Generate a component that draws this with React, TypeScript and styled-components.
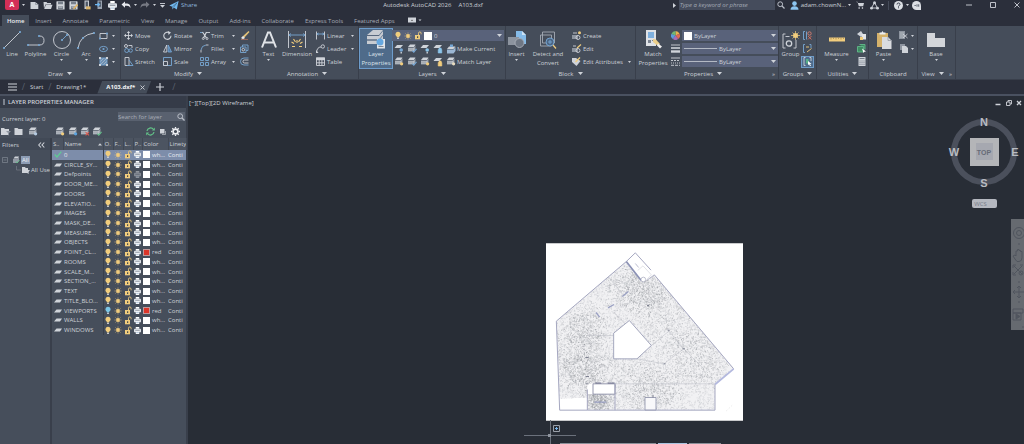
import React from "react";
import styled, { createGlobalStyle, css } from "styled-components";

const c = {
  frame: "#2b2f3b",
  ribbon: "#454d5a",
  edge: "#393f4b",
  field: "#59627a",
  canvas: "#282d36",
  text: "#cdd1d7",
  dim: "#a3a9b4",
  ink: "#cfd3d9",
  blue: "#77a7d4",
  gold: "#f1cd7d",
};

const Global = createGlobalStyle`
  * { box-sizing: border-box; }
  body { margin: 0; background: ${c.canvas}; }
  body, button, input, select, table {
    font-family: "Open Sans", "Noto Sans", sans-serif;
    font-size: 6px;
    font-weight: 500;
    line-height: 8px;
    color: ${c.text};
  }
  button { border: 0; padding: 0; background: none; white-space: nowrap; cursor: pointer; }
  svg { display: block; flex: none; }
`;

/* ---------- shared pieces ---------- */

const Page = styled.div`
  display: flex;
  flex-direction: column;
  height: 100vh;
  overflow: hidden;
`;

const Spacer = styled.div`
  flex: 1;
`;

const Cell = styled.span<{ $w?: number }>`
  display: flex;
  align-items: center;
  justify-content: center;
  flex: none;
  width: ${(p) => p.$w ?? 13}px;
`;

const IconButton = styled.button<{ $w?: number; $on?: boolean }>`
  display: flex;
  align-items: center;
  justify-content: center;
  flex: none;
  width: ${(p) => p.$w ?? 13}px;
  height: 12px;
  ${(p) =>
    p.$on &&
    css`
      background: #4f6c8c;
      outline: 1px solid #6f9cc8;
      outline-offset: -1px;
    `}
`;

const Caret = ({ small }: { small?: boolean }) => (
  <svg width={small ? 3 : 5} height={small ? 2 : 3} viewBox="0 0 5 3">
    <path d="M0 0h5L2.5 3z" fill={c.ink} />
  </svg>
);

type Draw = { w?: number; h?: number; children: React.ReactNode };
const Pic = ({ w = 10, h = 10, children }: Draw) => (
  <svg
    width={w}
    height={h}
    viewBox={`0 0 ${w} ${h}`}
    fill="none"
    stroke={c.ink}
    strokeWidth="0.9"
    aria-hidden="true"
  >
    {children}
  </svg>
);
const F = { fill: c.ink, stroke: "none" };
const FB = { fill: c.blue, stroke: "none" };
const FG = { fill: c.gold, stroke: "none" };
const FD = { fill: "#8d949f", stroke: "none" };

/* ---------- icons ---------- */

const Bulb = ({ cold }: { cold?: boolean }) => (
  <Pic w={8} h={9}>
    <circle cx="4" cy="3.2" r="2.5" fill={cold ? "#7cc6e6" : c.gold} stroke="none" />
    <path d="M2.9 5h2.2v1.5H2.9z" fill={cold ? "#7cc6e6" : c.gold} stroke="none" />
    <path d="M3.100 6.700h1.800v1.400H3.100z" {...F} />
  </Pic>
);
const Sun = () => (
  <Pic w={8} h={8}>
    <circle cx="4" cy="4" r="1.9" {...FG} />
    <path
      d="M4 .3v7.4M.3 4h7.4M1.3 1.3l5.4 5.4M6.7 1.3L1.3 6.7"
      stroke={c.gold}
      strokeWidth="0.6"
      opacity="0.7"
    />
  </Pic>
);
const Lock = () => (
  <Pic w={8} h={9}>
    <path d="M1 4h5v4.3H1z" {...FG} />
    <path d="M4.5 4V2.3q0-1.4 1.3-1.4t1.3 1.4v1" stroke={c.gold} />
    <path d="M3 5.3h1.2v1.6H3z" fill="#4a4f52" stroke="none" />
  </Pic>
);
const Printer = ({ off, w = 8 }: { off?: boolean; w?: number }) => (
  <svg width={w} height={w} viewBox="0 0 8 8" opacity={off ? 0.4 : 1}>
    <path d="M2 0h4v2H2z" fill="#fff" />
    <rect x="0" y="2" width="8" height="4" rx="1" fill="#dfe3e9" />
    <path d="M1.5 3.8h5" stroke="#6b7380" strokeWidth="0.7" />
    <path d="M2 4.8h4V8H2z" fill="#f4f6f8" />
    <path d="M2.6 6.3h2.8" stroke="#83a7cc" strokeWidth="0.6" />
  </svg>
);
const Magnifier = () => (
  <Pic w={8} h={8}>
    <circle cx="3.2" cy="3.2" r="2.4" stroke="#b9bec7" strokeWidth="1" />
    <path d="M5 5l2.5 2.5" stroke="#b9bec7" strokeWidth="1.3" />
  </Pic>
);
const Sheets = ({ mark = "none", shape = "dot" }: { mark?: string; shape?: string }) => (
  <Pic w={10} h={9}>
    <path d="M3 .5h5.5L7 3H1z" {...F} />
    <path d="M1 3.4h6L8.5 1.2v4L7 7.4H1z" fill="#9299a4" stroke="none" />
    <path d="M1 4.8h6M1 6.2h6M7 3.4v4" stroke="#dfe2e7" strokeWidth="0.5" />
    {shape === "dot" && <circle cx="7.6" cy="6.8" r="1.6" fill={mark} stroke="none" />}
    {shape === "x" && <path d="M5.6 5.2l3.4 3.2M9 5.2L5.6 8.4" stroke={mark} strokeWidth="1.1" />}
    {shape === "v" && <path d="M5.4 6.6l1.4 1.6 2.7-3.4" stroke={mark} strokeWidth="1.1" />}
  </Pic>
);
const Leaf = ({ mark, lock }: { mark: string; lock?: boolean }) => (
  <Pic w={10} h={10}>
    <path d="M3 1h6L6.5 4H.5z" {...F} />
    {lock ? (
      <path d="M5.2 5.500h3.6v3.500H5.2zM6 5.500V4h2.2v1.500" fill={mark} stroke={mark} strokeWidth="0.6" />
    ) : (
      <>
        <circle cx="7.2" cy="6" r="1.800" fill={mark} stroke="none" />
        <path d="M6.5 8h1.4v1.4H6.5z" {...F} />
      </>
    )}
  </Pic>
);
const Doc = () => (
  <Pic w={9} h={9}>
    <path d="M.5 1h4.8l3 2.4V8H.5z" {...F} />
    <path d="M5.5 1v2.5h3" stroke="#7f8692" strokeWidth="0.6" />
  </Pic>
);
const Folder = () => (
  <Pic w={10} h={9}>
    <path d="M.5 1h3l.8 1H8v1.4H2.5L1 7.6z" {...F} />
    <path d="M2.9 3.8h6.6L8 8H1.2z" {...F} />
  </Pic>
);
const Disk = ({ pen }: { pen?: boolean }) => (
  <Pic w={9} h={9}>
    <rect x=".4" y=".3" width="8.2" height="8.2" rx=".6" {...F} />
    <path d="M2 .6h5v2.6H2zM2 5.2h5v3H2z" fill="#777f8b" stroke="none" />
    <path d="M2.6 6.2h3.8" stroke="#e7e9ed" strokeWidth="0.6" />
    {pen && <path d="M4.5 8l4-4.4" stroke="#e1b566" strokeWidth="1.5" />}
  </Pic>
);
const Tray = ({ blue }: { blue?: boolean }) => (
  <Pic w={9} h={10}>
    <path d="M2.5.5h4.5v8.5H2.5z" fill={blue ? "#9aa3b0" : "#c6cad1"} stroke="none" />
    <path d="M3.6 1.6h2.3v5.2H3.6z" fill="#4c5564" stroke="none" />
    {blue ? (
      <path d="M0 4.6h4M2.6 3l2 1.6-2 1.6" stroke="#6db4ee" strokeWidth="1.1" />
    ) : (
      <path d="M4 9.4V6.4h4.6v3z" fill="#d9b36c" stroke="none" />
    )}
  </Pic>
);
const Arrow = ({ flip }: { flip?: boolean }) => (
  <svg width="10" height="8" viewBox="0 0 10 8" opacity={flip ? 0.4 : 1}>
    <g transform={flip ? "matrix(-1 0 0 1 10 0)" : undefined}>
      <path d="M.5 3.500L4 .5v2h2.300Q9.500 2.800 9.500 7Q8.300 4.700 6 4.700H4v2z" fill="#e7e9ee" />
    </g>
  </svg>
);
const Plane = () => (
  <Pic w={10} h={9}>
    <path d="M9.600 0L7.800 8.500 4.800 6.600 3.600 8.600 3.200 5.800.3 4.600z" fill="#72b9ee" stroke="none" />
    <path d="M3.300 5.800L8 1.800 4.600 6.300" stroke="#2f4e6c" strokeWidth=".5" />
  </Pic>
);

/* ---------- title bar ---------- */

const TitleBar = styled.header`
  display: flex;
  align-items: center;
  height: 13px;
  padding-bottom: 3px;
  background: ${c.frame};
  flex: none;
`;
const Logo = styled.button`
  width: 14px;
  height: 10px;
  margin-left: 5px;
  border-radius: 0 0 2px 2px;
  background: #d32f57;
  color: #fff;
  font-size: 7px;
  font-weight: 700;
  line-height: 10px;
`;
const Share = styled.button`
  display: flex;
  align-items: center;
  gap: 2px;
  margin-left: 2px;
  color: #8fb6dc;
`;
const AppTitle = styled.h1`
  display: flex;
  gap: 7px;
  flex: 1;
  margin: 0 0 0 186px;
  font-size: 6px;
  font-weight: 500;
  white-space: nowrap;
`;
const KeywordBox = styled.input`
  width: 96px;
  height: 10px;
  border: 0;
  padding: 0 1px;
  margin-left: 3px;
  background: #454c5c;
  font-style: italic;
  &::placeholder { color: ${c.dim}; opacity: 1; }
`;
const User = styled.button`
  display: flex;
  align-items: center;
  gap: 2px;
  margin-left: 2px;
`;
const Rule = styled.i`
  width: 1px;
  height: 9px;
  margin: 0 3px;
  background: #454b59;
`;
const WindowButtons = styled.div`
  display: flex;
  gap: 12px;
  margin: 0 1px 0 40px;
`;

const Title = () => (
  <TitleBar>
    <Logo aria-label="Application menu">A</Logo>
    <Cell $w={9}><Caret small /></Cell>
    <IconButton aria-label="New"><Doc /></IconButton>
    <IconButton aria-label="Open"><Folder /></IconButton>
    <IconButton aria-label="Save"><Disk /></IconButton>
    <IconButton aria-label="Save as"><Disk pen /></IconButton>
    <IconButton aria-label="Open from web"><Tray /></IconButton>
    <IconButton aria-label="Save to web"><Tray blue /></IconButton>
    <IconButton aria-label="Plot"><Printer w={9} /></IconButton>
    <IconButton $w={14} aria-label="Undo"><Arrow /></IconButton>
    <Cell $w={5}><Caret small /></Cell>
    <IconButton $w={13} aria-label="Redo"><Arrow flip /></IconButton>
    <Cell $w={6}><Caret small /></Cell>
    <IconButton $w={10} aria-label="Customize toolbar">
      <Pic w={5} h={5}><path d="M0 .5h5" /><path d="M0 2h5L2.500 4.800z" {...F} /></Pic>
    </IconButton>
    <Share><Plane />Share</Share>
    <AppTitle><span>Autodesk AutoCAD 2026</span><span>A103.dxf</span></AppTitle>
    <Pic w={3} h={5}><path d="M0 0l3 2.500L0 5z" {...F} /></Pic>
    <KeywordBox aria-label="Search help" placeholder="Type a keyword or phrase" />
    <IconButton aria-label="Search"><Magnifier /></IconButton>
    <User>
      <Pic w={9} h={9}>
        <circle cx="4.500" cy="2.600" r="2.300" fill="#8cc5f0" stroke="none" />
        <path d="M.5 8.800q0-3.500 4-3.500t4 3.500z" fill="#8cc5f0" stroke="none" />
      </Pic>
      adam.chownN...
      <Caret small />
    </User>
    <IconButton $w={18} aria-label="Store">
      <Pic w={8} h={8}>
        <path d="M0 .8h1.500l1.300 4.400h4.400L8 2H2.200z" {...F} />
        <path d="M2.500 7h1.300M5.800 7h1.300" strokeWidth="1.300" />
      </Pic>
    </IconButton>
    <IconButton $w={10} aria-label="Autodesk apps">
      <Pic w={9} h={9}>
        <path d="M4.500 1.500L1.500 7h6z" />
        <circle cx="4.500" cy="1.700" r="1.500" {...F} />
        <circle cx="1.500" cy="7.200" r="1.400" {...F} />
        <circle cx="7.500" cy="7.200" r="1.400" {...F} />
      </Pic>
    </IconButton>
    <Cell $w={6}><Caret small /></Cell>
    <Rule />
    <IconButton aria-label="Help">
      <svg width="9" height="9" viewBox="0 0 9 9">
        <circle cx="4.500" cy="4.500" r="4.500" fill="#dcdfe4" />
        <path d="M3 3.500q0-1.500 1.500-1.500T6 3.400q0 .8-1.500 1.600v.6M4.500 6.300v1" stroke="#3a404e" fill="none" />
      </svg>
    </IconButton>
    <Cell $w={5}><Caret small /></Cell>
    <IconButton aria-label="Assistant">
      <svg width="9" height="9" viewBox="0 0 9 9">
        <path d="M4.500 0a4.500 4.500 0 0 1 4.500 4.500V9H4.500a4.500 4.500 0 0 1 0-9z" fill="#dcdfe4" />
        <path d="M2.500 4.500h1.300M5 3.300v2.400M6.700 3.300v2.400" stroke="#59606d" fill="none" />
      </svg>
    </IconButton>
    <WindowButtons>
      <IconButton $w={12} aria-label="Minimize"><Pic w={6} h={6}><path d="M0 3h6" /></Pic></IconButton>
      <IconButton $w={12} aria-label="Maximize"><Pic w={6} h={6}><path d="M.5.500h5v5h-5z" /></Pic></IconButton>
      <IconButton $w={12} aria-label="Close"><Pic w={6} h={6}><path d="M.5.500l5 5M5.500.500l-5 5" /></Pic></IconButton>
    </WindowButtons>
  </TitleBar>
);

/* ---------- ribbon tabs ---------- */

const TabRow = styled.nav`
  display: flex;
  align-items: flex-end;
  height: 13px;
  padding-left: 2px;
  background: ${c.frame};
  flex: none;
`;
const Tab = styled.button<{ $on?: boolean }>`
  height: 11px;
  padding: 0 5px;
  margin-right: 1px;
  color: ${(p) => (p.$on ? "#eceef1" : "#a7acb6")};
  background: ${(p) => (p.$on ? c.ribbon : "none")};
  font-weight: ${(p) => (p.$on ? 600 : 400)};
`;
const TABS = ["Home", "Insert", "Annotate", "Parametric", "View", "Manage", "Output", "Add-ins", "Collaborate", "Express Tools", "Featured Apps"];

/* ---------- ribbon ---------- */

const RibbonBar = styled.div`
  display: flex;
  height: 54px;
  background: ${c.ribbon};
  border-bottom: 1px solid ${c.edge};
  flex: none;
`;
const Group = styled.section<{ $w: number }>`
  display: flex;
  flex-direction: column;
  flex: none;
  width: ${(p) => p.$w}px;
  padding: 3px 1px 0;
  border-right: 1px solid ${c.edge};
`;
const GroupBody = styled.div`
  display: flex;
  height: 39px;
`;
const GroupTitle = styled.button<{ $launch?: boolean }>`
  position: relative;
  display: flex;
  align-items: center;
  justify-content: center;
  gap: 4px;
  height: 11px;
  padding-right: ${(p) => (p.$launch ? 8 : 0)}px;
`;
const Launcher = styled.span`
  position: absolute;
  right: 2px;
`;
const Col = styled.div<{ $w: number }>`
  display: flex;
  flex-direction: column;
  flex: none;
  width: ${(p) => p.$w}px;
`;
const Row = styled.div`
  display: flex;
  align-items: center;
  height: 13px;
`;
const Tool = styled.button`
  display: flex;
  align-items: center;
  height: 13px;
  flex: none;
  text-align: left;
  > svg:last-child { margin-left: auto; margin-right: 3px; }
`;
const Big = styled.button<{ $w: number; $on?: boolean }>`
  display: flex;
  flex-direction: column;
  align-items: center;
  flex: none;
  width: ${(p) => p.$w}px;
  height: 39px;
  white-space: normal;
  ${(p) =>
    p.$on &&
    css`
      background: #4f6b8a;
      outline: 1px solid #6d9ccb;
      color: #dfe5ec;
    `}
`;
const BigArt = styled.span`
  display: flex;
  align-items: center;
  justify-content: center;
  height: 21px;
`;
const BigLabel = styled.span`
  display: block;
  line-height: 9px;
  white-space: pre;
  text-align: center;
`;
const Combo = styled.div`
  display: flex;
  align-items: center;
  flex: 1;
  height: 11px;
  padding: 0 2px;
  gap: 2px;
  background: ${c.field};
`;
const Select = styled.select`
  appearance: none;
  flex: 1;
  min-width: 0;
  height: 10px;
  padding: 0;
  border: 0;
  background: none;
`;
const Swatch = styled.i<{ $color?: string; $size?: number }>`
  flex: none;
  width: ${(p) => p.$size ?? 8}px;
  height: ${(p) => p.$size ?? 8}px;
  background: ${(p) => p.$color ?? "#fff"};
  ${(p) => p.$color && css`border: 1px solid #c09a9c;`}
`;
const LineSample = styled.i`
  flex: none;
  width: 33px;
  height: 1px;
  background: #b3b9c4;
`;

const BigTool = ({ w, label, art, caret, on }: { w: number; label: string; art: React.ReactNode; caret?: boolean; on?: boolean }) => (
  <Big $w={w} $on={on}>
    <BigArt>{art}</BigArt>
    <BigLabel>{label}</BigLabel>
    {caret && <Caret small />}
  </Big>
);
const SmallTool = ({ icon, label, caret }: { icon: React.ReactNode; label?: string; caret?: boolean }) => (
  <Tool aria-label={label}>
    <Cell>{icon}</Cell>
    {label}
    {caret && <Caret small />}
  </Tool>
);
const Panel = ({ w, title, caret, launch, children }: { w: number; title: string; caret?: boolean; launch?: boolean; children: React.ReactNode }) => (
  <Group $w={w}>
    <GroupBody>{children}</GroupBody>
    <GroupTitle $launch={launch}>
      {title}
      {caret && <Caret />}
      {launch && <Launcher>»</Launcher>}
    </GroupTitle>
  </Group>
);

const Node = ({ x, y }: { x: number; y: number }) => (
  <rect x={x - 0.9} y={y - 0.9} width="1.8" height="1.8" {...FB} />
);

const Ribbon = () => (
  <RibbonBar>
    <Panel w={121} title="Draw" caret>
      <BigTool w={22} label="Line" art={<Pic w={18} h={18}><path d="M1 17L17 1" /><Node x={1} y={17} /><Node x={17} y={1} /></Pic>} />
      <BigTool w={25} label="Polyline" art={<Pic w={18} h={18}><path d="M1 14h11.500q4.500 0 4.500-4.500T12.500 5" /><Node x={1} y={14} /><Node x={12} y={14} /><Node x={12} y={5} /></Pic>} />
      <BigTool w={27} label="Circle" caret art={<Pic w={18} h={18}><circle cx="9" cy="9" r="8.500" /><path d="M9 9l5-5" stroke={c.blue} /><Node x={9} y={9} /><Node x={14} y={4} /></Pic>} />
      <BigTool w={22} label="Arc" caret art={<Pic w={18} h={18}><path d="M1 17Q3 4 17 2" /><Node x={1} y={17} /><Node x={6} y={7} /><Node x={17} y={2} /></Pic>} />
      <Col $w={21}>
        <SmallTool caret icon={<Pic w={9} h={8}><path d="M1 1.500h7v5H1z" /><Node x={1} y={6.5} /><Node x={8} y={1.5} /></Pic>} />
        <SmallTool caret icon={<Pic w={9} h={8}><ellipse cx="4.500" cy="4" rx="4" ry="2.600" stroke={c.blue} /><Node x={4.5} y={4} /></Pic>} />
        <SmallTool caret icon={<Pic w={9} h={9}><path d="M1 1h7v7H1z" fill="#6d8fb2" stroke={c.blue} /><path d="M2 7l5-5M1.500 4.500l3-3M4.500 7.500l3-3" strokeWidth=".5" /><path d="M0 0h2v2H0zM7 0h2v2H7zM0 7h2v2H0zM7 7h2v2H7z" {...F} /></Pic>} />
      </Col>
    </Panel>

    <Panel w={135} title="Modify" caret>
      <Col $w={39}>
        <SmallTool label="Move" icon={<Pic w={9} h={9}><path d="M4.500 1v7M1 4.500h7" /><path d="M4.500 0l1.700 2H2.800zM4.500 9l1.700-2H2.800zM0 4.500l2-1.700v3.400zM9 4.500L7 2.800v3.400z" {...F} /></Pic>} />
        <SmallTool label="Copy" icon={<Pic w={9} h={9}><circle cx="2" cy="2" r="1.500" /><path d="M4.500 1.500H8V4" /><circle cx="2.700" cy="6.500" r="2" stroke={c.blue} /><circle cx="6.700" cy="6.500" r="1.700" stroke={c.blue} /></Pic>} />
        <SmallTool label="Stretch" icon={<Pic w={10} h={9}><path d="M1 .5h4v8H1z" /><path d="M5 3l4 5.500H3" stroke={c.blue} /></Pic>} />
      </Col>
      <Col $w={37}>
        <SmallTool label="Rotate" icon={<Pic w={9} h={9}><path d="M6 1.500A3.600 3.600 0 1 0 8 4.800" strokeWidth="1.100" /><path d="M5 0l3 1.500L5.500 4z" {...F} /></Pic>} />
        <SmallTool label="Mirror" icon={<Pic w={9} h={9}><path d="M3.800 1v7H.5z" /><path d="M5.200 1v7h3.300z" fill="#527aa5" stroke={c.blue} /></Pic>} />
        <SmallTool label="Scale" icon={<Pic w={9} h={9}><path d="M.5.500h8v8h-8z" stroke={c.blue} /><path d="M.5 4.500h4v4h-4z" /></Pic>} />
      </Col>
      <Col $w={40}>
        <SmallTool label="Trim" caret icon={<Pic w={10} h={9}><path d="M0 1.500h3" stroke={c.blue} /><path d="M6 1.500h4" /><path d="M2.500 1l4 6M6.500 1l-3 6" strokeWidth="1.200" /><circle cx="3.300" cy="7.500" r="1" /><circle cx="7" cy="7.500" r="1" /></Pic>} />
        <SmallTool label="Fillet" caret icon={<Pic w={9} h={9}><path d="M1 8.500V6" /><path d="M1 6Q1.500 1.500 6 1" stroke={c.blue} /><path d="M6 1h2.500" /></Pic>} />
        <SmallTool label="Array" caret icon={<Pic w={9} h={9}><path d="M.5.500h3v3h-3zM5.500.500h3v3h-3zM.5 5.500h3v3h-3zM5.500 5.500h3v3h-3z" stroke={c.blue} /></Pic>} />
      </Col>
      <Col $w={14}>
        <SmallTool icon={<Pic w={10} h={9}><path d="M8.500 0l1 1L4 7 2.500 5.500z" fill="#e2c178" stroke="none" /><path d="M3 5l2 2-2 1.300L1 7z" fill="#e6e8ec" stroke="none" /><path d="M1 8.600h7" stroke="#d67f62" strokeWidth=".6" /></Pic>} />
        <SmallTool icon={<Pic w={9} h={9}><path d="M.5 3h5.500v5.500H.5zM2.500 3V1H8v5.500H6" stroke={c.blue} /><circle cx="3.300" cy="5.700" r="1.300" /></Pic>} />
        <SmallTool icon={<Pic w={9} h={9}><path d="M8.500 1H4Q.5 1 .5 4.500T4 8h4.500" stroke={c.blue} /><path d="M8.500 3H4.500Q3 3 3 4.500T4.500 6h4" /></Pic>} />
      </Col>
    </Panel>

    <Panel w={103} title="Annotation" caret>
      <BigTool w={23} label="Text" caret art={<Pic w={16} h={18}><path d="M1 16.500L7 1.500h2l6 15M3.500 11.500h9" strokeWidth="2" stroke="#e0e3e7" /></Pic>} />
      <BigTool w={34} label="Dimension" art={<Pic w={18} h={18}><path d="M.5 0v17M17.500 0v17" /><path d="M1 4h16M1 4l2-1.500M1 4l2 1.500M17 4l-2-1.500M17 4l-2 1.500" stroke={c.blue} /><path d="M9 9v3M3.500 11l2.500 1.500M14.500 11L12 12.500M5.500 8l2 3M12.500 8l-2 3M4 15.500h3M11 15.500h3" stroke={c.gold} strokeWidth="1.100" /></Pic>} />
      <Col $w={43}>
        <SmallTool label="Linear" caret icon={<Pic w={9} h={9}><path d="M.5.500v8M8.500.500v8" /><path d="M1 3h7M1 3l1.500-1M1 3l1.500 1M8 3L6.500 2M8 3L6.500 4" stroke={c.blue} /></Pic>} />
        <SmallTool label="Leader" caret icon={<Pic w={9} h={9}><path d="M.5 8.500Q1 3 5 3" /><circle cx="6.800" cy="2.500" r="1.700" /><path d="M0 6v3h2.500z" {...F} /></Pic>} />
        <SmallTool label="Table" icon={<Pic w={9} h={9}><path d="M.5 1h8v7.500h-8zM.5 5.800h8M3.200 3v5.500M5.900 3v5.500" /><path d="M0 .5h9v2.700H0z" {...F} /></Pic>} />
      </Col>
    </Panel>

    <Panel w={147} title="Layers" caret>
      <BigTool
        w={32}
        on
        label={"Layer\nProperties"}
        art={
          <Pic w={20} h={19}>
            <path d="M7 0h10l-4 5H1zM1 6h12l4-5v3.500L13 9.500H1zM1 10.500h12l4-5V9l-4 5H1z" fill="#c8ccd2" stroke="none" />
            <path d="M1 5.500h12M1 10h12" stroke="#5c6675" strokeWidth=".7" />
            <path d="M11 9h8v9.500h-8z" fill="#e3e6ea" stroke="none" />
            <circle cx="14" cy="12" r="3.500" fill="#67a8df" stroke="none" />
            <path d="M12.500 16.500h5" stroke="#727b88" />
          </Pic>
        }
      />
      <Col $w={112}>
        <Row>
          <Combo>
            <Bulb /><Sun /><Lock />
            <Swatch />
            <Select aria-label="Current layer"><option>0</option></Select>
            <Caret />
          </Combo>
        </Row>
        <Row>
          <IconButton aria-label="Off"><Leaf mark={c.blue} /></IconButton>
          <IconButton aria-label="Isolate"><Sheets mark={c.blue} shape="v" /></IconButton>
          <IconButton aria-label="Freeze"><Leaf mark="#8cc5ea" /></IconButton>
          <IconButton aria-label="Lock"><Leaf mark="#8cc5ea" lock /></IconButton>
          <SmallTool label="Make Current" icon={<Pic w={10} h={10}><path d="M3 2.500h6.500L7.500 5H1z" {...F} /><path d="M1 5.500h6.500L9.500 3v4L7.500 9.500H1z" fill="#9cb7d4" stroke="none" /><path d="M4 .5h3v2.500H4z" {...FB} /></Pic>} />
        </Row>
        <Row>
          <IconButton aria-label="Turn all on"><Sheets mark={c.gold} /></IconButton>
          <IconButton aria-label="Unisolate"><Sheets mark={c.blue} shape="v" /></IconButton>
          <IconButton aria-label="Thaw"><Sheets mark={c.gold} /></IconButton>
          <IconButton aria-label="Unlock"><Leaf mark={c.gold} lock /></IconButton>
          <SmallTool label="Match Layer" icon={<Sheets mark="#e8dcc0" />} />
        </Row>
      </Col>
    </Panel>

    <Panel w={130} title="Block" caret>
      <BigTool w={19} label="Insert" caret art={<Pic w={18} h={18}><path d="M8 0h6l4 4v9H8z" fill="#85bbe8" stroke="none" /><path d="M14 0v4h4z" fill="#cfe3f4" stroke="none" /><path d="M0 6h11v8H0z" {...FD} /><circle cx="11.500" cy="12" r="4.500" fill="#6f7784" stroke="#a8aeb8" /></Pic>} />
      <BigTool w={44} label={"Detect and\nConvert"} art={<Pic w={18} h={18}><path d="M3.500 1h12v11h-12zM1.500 4h11v11h-11z" stroke="#a3a9b3" /><circle cx="11" cy="11" r="4" fill="#4c6685" stroke={c.blue} /><path d="M11 9v4M9 11h4" stroke={c.blue} /><path d="M14 14l3 3.500" stroke={c.gold} strokeWidth="1.200" /></Pic>} />
      <Col $w={64}>
        <SmallTool label="Create" icon={<Pic w={10} h={9}><path d="M0 4h6v4H0z" {...FD} /><circle cx="6" cy="6.500" r="2" /><path d="M1 2h4" /><circle cx="7.500" cy="1.800" r="1.500" {...FG} /></Pic>} />
        <SmallTool label="Edit" icon={<Pic w={10} h={9}><path d="M0 4h6v4H0z" {...FD} /><circle cx="6" cy="6.500" r="2" /><path d="M1 2h3" /><path d="M5 4l4-3.500" stroke={c.gold} strokeWidth="1.200" /></Pic>} />
        <SmallTool label="Edit Attributes" caret icon={<Pic w={9} h={9}><path d="M0 1h4l4.500 3-4 5L0 5z" {...F} /><path d="M3.500 5L8 .5" stroke={c.gold} strokeWidth="1.200" /></Pic>} />
      </Col>
    </Panel>

    <Panel w={143} title="Properties" caret launch>
      <BigTool w={32} label={"Match\nProperties"} art={<Pic w={18} h={19}><path d="M2 0h10v16H2z" fill="#dfe2e6" stroke="none" /><path d="M4 2h6v6H4z" fill="#7eb0de" stroke="none" /><path d="M4 10h3v3H4zM8 10h2v1H8z" fill="#7b8390" stroke="none" /><path d="M9 9l3 .5 4 4.500-2 2-5-4z" fill="#edd08b" stroke="none" /><path d="M14 13.500l4 3-2 2-3-3z" fill="#efefef" stroke="none" /></Pic>} />
      <Col $w={109}>
        <Row>
          <Cell>
            <svg width="9" height="9" viewBox="-5 -5 10 10">
              <path d="M0 0V-5A5 5 0 0 1 4.500-2z" fill="#e8b04e" />
              <path d="M0 0L4.500-2A5 5 0 0 1 3 4z" fill="#df6a52" />
              <path d="M0 0L3 4A5 5 0 0 1-3 4z" fill="#a56bb5" />
              <path d="M0 0L-3 4A5 5 0 0 1-4.500-2z" fill="#5b9cdb" />
              <path d="M0 0L-4.500-2A5 5 0 0 1 0-5z" fill="#72b872" />
            </svg>
          </Cell>
          <Combo><Swatch /><Select aria-label="Object color"><option>ByLayer</option></Select><Caret /></Combo>
        </Row>
        <Row>
          <Cell><Pic w={9} h={9}><path d="M0 1h9" /><path d="M0 4h9" strokeWidth="1.600" /><path d="M0 7.500h9" strokeWidth="2.400" /></Pic></Cell>
          <Combo><LineSample /><Select aria-label="Lineweight"><option>ByLayer</option></Select><Caret /></Combo>
        </Row>
        <Row>
          <Cell><Pic w={9} h={9}><path d="M0 1h9" /><path d="M0 3.500h9" strokeDasharray="2 1" /><path d="M0 6h9" strokeDasharray="1 1" /><path d="M0 8.300h9" strokeDasharray="3 1" /></Pic></Cell>
          <Combo><LineSample /><Select aria-label="Linetype"><option>ByLayer</option></Select><Caret /></Combo>
        </Row>
      </Col>
    </Panel>

    <Panel w={38} title="Groups" caret>
      <BigTool w={21} label="Group" art={<Pic w={18} h={18}><path d="M3.500 3H1v14h2.500M11.500 17H14V9" /><path d="M3.500 5.500h4" /><circle cx="7" cy="12.500" r="2.700" strokeWidth="1.300" /><circle cx="13.500" cy="4.500" r="2.500" {...FG} /><path d="M13.500 0v9M9 4.500h9M10.500 1.500l6 6M16.500 1.500l-6 6" stroke={c.gold} strokeWidth=".7" /></Pic>} />
      <Col $w={13}>
        <Row><IconButton aria-label="Ungroup"><Pic w={9} h={9}><path d="M2 .5H.5v8H2M3.500.500v8" stroke={c.blue} /><circle cx="6.500" cy="2.500" r="1.700" stroke="#d98070" /><path d="M5 5l3.500 3.500M8.500 5L5 8.500" stroke="#d96f5f" /></Pic></IconButton></Row>
        <Row><IconButton aria-label="Group edit"><Pic w={9} h={9}><path d="M2 .5H.5v8H2M6.500.500H8V4" stroke={c.blue} /><path d="M3 3h3M4 8l4.500-3.500" stroke={c.gold} /></Pic></IconButton></Row>
        <Row><IconButton $on aria-label="Group selection"><Pic w={9} h={9}><path d="M2.500.500H1v8h1.500M6.500.500H8V4" /><path d="M3 2h2.500v4.500H3z" fill="#57b087" stroke="none" /><path d="M5 4l3.500 3H7l1 2-1 .3-.8-2L5 8z" fill="#fff" stroke="none" /></Pic></IconButton></Row>
      </Col>
    </Panel>

    <Panel w={52} title="Utilities" caret>
      <BigTool w={37} label="Measure" caret art={<Pic w={16} h={5}><path d="M0 .5h16v4H0z" {...FG} /><path d="M2 .5v2M4.500.500v1.500M7 .5v2M9.500.500v1.500M12 .5v2M14.500.500v1.500" stroke="#9b8350" strokeWidth=".7" /></Pic>} />
      <Col $w={13}>
        <SmallTool icon={<Pic w={9} h={9}><path d="M0 3l4-3 2 3-2 3z" {...F} /><path d="M4.500 3h4.500v5.500H4.500z" fill="#e2e4e8" stroke="none" /><path d="M3 6h3v3H3z" {...FG} /></Pic>} />
        <SmallTool icon={<Pic w={9} h={9}><path d="M.5 2.500h6v5.500h-6zM2.500.500H8v5" fill="#3e8b62" stroke="#62b98a" /><path d="M5 4.500l4 3-1.700.3L6.500 9z" fill="#fff" stroke="none" /></Pic>} />
        <SmallTool icon={<Pic w={8} h={9}><path d="M.5 0h7v9h-7z" {...F} /><path d="M1.500 1.500h5" stroke="#6c7481" /><path d="M1.500 4h5M1.500 5.700h5M1.500 7.400h5" stroke="#6c7481" strokeDasharray="1 1" /></Pic>} />
      </Col>
    </Panel>

    <Panel w={49} title="Clipboard">
      <BigTool w={27} label="Paste" caret art={<Pic w={16} h={18}><path d="M1 2h11v14H1z" fill="#d5b26b" stroke="none" /><path d="M3.500 3.500V1.500h2L6.500 0l1 1.500h2v2z" fill="#eceef0" stroke="none" /><path d="M6 6h6l3.500 3.500V18H6z" fill="#d9dbdf" stroke="none" /><path d="M12 6v3.500h3.500" stroke="#8b919b" strokeWidth=".7" /></Pic>} />
      <Col $w={20}>
        <SmallTool caret icon={<Pic w={9} h={9}><path d="M0 0h6v8H0z" {...FD} /><path d="M1 2h4M1 4h4M1 6h4" strokeWidth=".6" /><path d="M4 3l4.500 4M8.500 3L4 7" /></Pic>} />
        <SmallTool caret icon={<Pic w={8} h={9}><path d="M0 0h5v6H0z" {...FD} /><path d="M2 2h4l2 2v5H2z" {...F} /></Pic>} />
      </Col>
    </Panel>

    <Panel w={38} title="View" caret launch>
      <BigTool w={34} label="Base" caret art={<Pic w={18} h={14}><path d="M0 0h8v5h10v9H0z" fill="#d3d6da" stroke="none" /></Pic>} />
    </Panel>
  </RibbonBar>
);

/* ---------- document tabs ---------- */

const DocTabs = styled.nav`
  display: flex;
  align-items: center;
  height: 14px;
  padding-left: 7px;
  background: ${c.frame};
  flex: none;
`;
const Slash = styled.span`
  width: 11px;
  text-align: center;
  font-size: 9px;
  color: #59606e;
`;
const DocTab = styled.button<{ $on?: boolean }>`
  padding: 0 1px;
  ${(p) =>
    p.$on &&
    css`
      display: flex;
      align-items: center;
      gap: 5px;
      height: 13px;
      margin-left: 10px;
      padding: 0 6px 0 9px;
      background: ${c.ribbon};
      clip-path: polygon(5px 0, 100% 0, calc(100% - 5px) 100%, 0 100%);
      color: #f1f2f4;
      font-weight: 700;
    `}
`;
const Strip = styled.div`
  height: 2px;
  background: #4a5160;
  flex: none;
`;

/* ---------- layer properties manager ---------- */

const Work = styled.main`
  display: flex;
  flex: 1;
  min-height: 0;
`;
const Palette = styled.aside`
  display: flex;
  flex-direction: column;
  flex: none;
  width: 188px;
  background: #464e5b;
  border-right: 2px solid ${c.edge};
`;
const PaletteTitle = styled.h2`
  display: flex;
  align-items: center;
  gap: 3px;
  height: 12px;
  margin: 0;
  padding-left: 3px;
  background: #353b48;
  font-size: 6px;
  font-weight: 600;
`;
const Grip = styled.i`
  width: 2px;
  height: 6px;
  background: #7c838f;
`;
const SearchRow = styled.div`
  display: flex;
  justify-content: space-between;
  height: 17px;
  padding: 4px 1px 0 2px;
`;
const CurrentLayer = styled.span`
  padding-top: 3px;
`;
const SearchField = styled.label`
  display: flex;
  align-items: center;
  width: 67px;
  height: 9px;
  background: #59616f;
`;
const SearchInput = styled.input`
  flex: 1;
  min-width: 0;
  height: 9px;
  padding: 0;
  border: 0;
  background: none;
  &::placeholder { color: #a9aeb8; opacity: 1; }
`;
const ToolRow = styled.div`
  display: flex;
  align-items: center;
  height: 13px;
  padding-right: 4px;
`;
const Split = styled.div`
  display: flex;
  flex: 1;
  min-height: 0;
`;
const Filters = styled.div`
  width: 52px;
  flex: none;
  overflow: hidden;
  border-right: 2px solid ${c.edge};
  white-space: nowrap;
`;
const FilterHead = styled.div`
  display: flex;
  justify-content: space-between;
  height: 12px;
  padding: 3px 5px 0 2px;
  background: #414956;
`;
const Tree = styled.ul`
  list-style: none;
  margin: 0;
  padding: 5px 0 0 2px;
`;
const Leafline = styled.li<{ $in?: boolean }>`
  display: flex;
  align-items: center;
  height: 10px;
  gap: 1px;
  padding-left: ${(p) => (p.$in ? 14 : 0)}px;
`;
const TreeIcon = styled.span`
  margin-left: 3px;
`;
const Picked = styled.span`
  padding: 0 1px;
  background: #8d9db5;
  color: #eef1f5;
`;
const Grid = styled.table`
  height: 197px;
  table-layout: fixed;
  border-collapse: collapse;
  width: 134px;
  th, td {
    padding: 0;
    text-align: left;
    white-space: nowrap;
    overflow: hidden;
    line-height: 8px;
  }
  td svg { margin: 0 auto; }
  th { height: 12px; font-weight: 500; background: #4c5461; padding-left: 1px; border-right: 1px solid #414854; }
  td:nth-child(2) { border-right: 1px solid ${c.edge}; padding-left: 1px; }
`;
const LayerRow = styled.tr<{ $on?: boolean }>`
  ${(p) => p.$on && css`background: #7d8daa; color: #e8ebf0;`}
`;
const ColorTag = styled.span`
  display: flex;
  align-items: center;
  gap: 2px;
  padding-left: 1px;
`;
const NameHead = styled.span`
  display: flex;
  align-items: center;
  justify-content: space-between;
  padding-right: 1px;
`;

type Layer = { name: string; red?: boolean; off?: boolean; noPlot?: boolean; current?: boolean };
const LAYERS: Layer[] = [
  { name: "0", current: true },
  { name: "CIRCLE_SY..." },
  { name: "Defpoints", noPlot: true },
  { name: "DOOR_ME..." },
  { name: "DOORS" },
  { name: "ELEVATIO..." },
  { name: "IMAGES" },
  { name: "MASK_DE..." },
  { name: "MEASURE..." },
  { name: "OBJECTS" },
  { name: "POINT_CL...", red: true },
  { name: "ROOMS" },
  { name: "SCALE_M..." },
  { name: "SECTION_..." },
  { name: "TEXT" },
  { name: "TITLE_BLO..." },
  { name: "VIEWPORTS", red: true, off: true },
  { name: "WALLS" },
  { name: "WINDOWS" },
];

const LayerManager = () => (
  <Palette>
    <PaletteTitle><Grip />LAYER PROPERTIES MANAGER</PaletteTitle>
    <SearchRow>
      <CurrentLayer>Current layer: 0</CurrentLayer>
      <SearchField><SearchInput aria-label="Search for layer" placeholder="Search for layer" /><Magnifier /></SearchField>
    </SearchRow>
    <ToolRow>
      <IconButton $w={12} aria-label="New property filter"><Pic w={10} h={9}><path d="M0 1h3l1 1h4v6H0z" {...F} /><path d="M5 4h5L8 6v2.500L7 8V6z" fill="#8d949f" stroke="none" /></Pic></IconButton>
      <IconButton aria-label="New group filter"><Pic w={9} h={9}><path d="M.5 1h3l1 1h4v6h-8z" {...F} /></Pic></IconButton>
      <IconButton $w={16} aria-label="Layer states manager"><Sheets mark="#b5cbe2" /></IconButton>
      <Cell />
      <IconButton $w={12} aria-label="New layer"><Sheets mark={c.gold} /></IconButton>
      <IconButton aria-label="New layer VP frozen"><Sheets mark="#5ba4e0" /></IconButton>
      <IconButton $w={12} aria-label="Delete layer"><Sheets mark="#db5c50" shape="x" /></IconButton>
      <IconButton $w={12} aria-label="Set current"><Sheets mark="#66c08c" shape="v" /></IconButton>
      <Spacer />
      <IconButton aria-label="Refresh"><Pic w={9} h={9}><path d="M1 4A3.600 3.600 0 0 1 7.500 2.500M8 5A3.600 3.600 0 0 1 1.500 6.500" stroke="#63c389" strokeWidth="1.200" /><path d="M8.800.500v3H6zM.2 8.500v-3H3z" fill="#63c389" stroke="none" /></Pic></IconButton>
      <IconButton $w={12} aria-label="Override highlight"><Pic w={6} h={7}><path d="M0 1h4.500v4.500H0z" {...F} /><path d="M2 6.500h3.500V3" strokeWidth=".6" /></Pic></IconButton>
      <IconButton aria-label="Settings"><Pic w={9} h={9}><circle cx="4.500" cy="4.500" r="2.400" strokeWidth="1.600" stroke="#eceef1" /><path d="M4.500 0v1.500M4.500 7.500V9M0 4.500h1.500M7.500 4.500H9M1.300 1.300l1 1M6.700 6.700l1 1M7.700 1.300l-1 1M2.300 6.700l-1 1" strokeWidth="1.300" stroke="#eceef1" /></Pic></IconButton>
    </ToolRow>
    <Split>
      <Filters>
        <FilterHead>Filters
          <Pic w={7} h={8}><path d="M3 1.500L.7 4 3 6.500M6.300 1.500L4 4l2.300 2.500" strokeWidth="1.100" /></Pic>
        </FilterHead>
        <Tree>
          <Leafline>
            <Pic w={6} h={6}><path d="M.5.500h5v5h-5zM1.500 3h3" stroke="#8c939e" strokeWidth=".6" /></Pic>
            <TreeIcon><Pic w={8} h={8}><path d="M3 .5h4L6 2.500H1.500z" {...F} /><path d="M1 3h4.500L7 1v4L5.500 7H1z" fill="#9299a4" stroke="none" /><path d="M3.500 5.500l1.500 1.500L7.500 4" stroke="#66c08c" /></Pic></TreeIcon>
            <Picked>All</Picked>
          </Leafline>
          <Leafline $in>
            <Pic w={5} h={8}><path d="M.5 0v4H5" stroke="#7c838f" strokeWidth=".6" /></Pic>
            <Pic w={8} h={8}><path d="M0 1h3l.7 1H6v5H0z" {...F} /><path d="M4 4h4L6.600 6v2L5.600 7.400V6z" {...F} /></Pic>
            <span>All Use</span>
          </Leafline>
        </Tree>
      </Filters>
      <div>
        <Grid>
          <colgroup>
            <col width="11" /><col width="40" /><col width="10" /><col width="10" /><col width="10" /><col width="9" /><col width="26" /><col width="18" />
          </colgroup>
          <thead>
            <tr>
              <th>S..</th>
              <th><NameHead>Name<Pic w={4} h={3}><path d="M0 2.500h4L2 .3z" {...F} /></Pic></NameHead></th>
              <th>O.</th><th>F..</th><th>L..</th><th>P..</th><th>Color</th><th>Linety</th>
            </tr>
          </thead>
          <tbody>
            {LAYERS.map((l) => (
              <LayerRow key={l.name} $on={l.current}>
                <td>
                  {l.current ? (
                    <Pic w={8} h={7}><path d="M.8 3.500l2.200 2.500L7.300.700" stroke="#5fcb94" strokeWidth="1.200" /></Pic>
                  ) : (
                    <Pic w={8} h={4}><path d="M2.500.500H8L6 3.500H0z" {...F} /></Pic>
                  )}
                </td>
                <td>{l.name}</td>
                <td><Bulb cold={l.off} /></td>
                <td><Sun /></td>
                <td><Lock /></td>
                <td><Printer w={7} off={l.noPlot} /></td>
                <td><ColorTag><Swatch $size={7} $color={l.red ? "#dc3529" : undefined} />{l.red ? "red" : "wh..."}</ColorTag></td>
                <td>Conti</td>
              </LayerRow>
            ))}
          </tbody>
        </Grid>
      </div>
    </Split>
  </Palette>
);

/* ---------- drawing canvas ---------- */

const Canvas = styled.section`
  position: relative;
  flex: 1;
  min-width: 0;
  background: ${c.canvas};
  overflow: hidden;
`;
const CanvasBar = styled.div`
  display: flex;
  align-items: center;
  justify-content: space-between;
  height: 13px;
  padding: 0 1px;
`;
const CanvasButtons = styled.div`
  display: flex;
`;
const At = styled.div<{ $left?: number; $right?: number; $top?: number; $bottom?: number }>`
  position: absolute;
  ${(p) => p.$left !== undefined && `left: ${p.$left}px;`}
  ${(p) => p.$right !== undefined && `right: ${p.$right}px;`}
  ${(p) => p.$top !== undefined && `top: ${p.$top}px;`}
  ${(p) => p.$bottom !== undefined && `bottom: ${p.$bottom}px;`}
`;
const Wcs = styled.button`
  width: 25px;
  height: 9px;
  padding-right: 8px;
  border-radius: 2px;
  background: #b5b8c0;
  color: #787d89;
`;
const NavBar = styled.div`
  width: 13px;
  height: 111px;
  overflow: hidden;
  background: #666a70;
`;

/* Scan points, heavier around the lobbies and corridors. */
const scan = (() => {
  let s = 7;
  const rnd = () => ((s = (s * 16807) % 2147483647) / 2147483647);
  const spots = [
    [370, 170, 60], [190, 400, 50], [400, 460, 60], [530, 370, 70], [200, 280, 50],
    [290, 440, 80], [230, 490, 30], [460, 240, 90], [150, 370, 70], [330, 130, 80],
  ];
  const light: string[] = [];
  const dark: string[] = [];
  for (let i = 0; i < 9000; i++) light.push(`M${Math.round(105 + rnd() * 540)} ${Math.round(50 + rnd() * 476)}h3`);
  for (let i = 0; i < 5000; i++) {
    const [x, y, r] = spots[i % spots.length];
    const a = rnd() * Math.PI * 2;
    const d = (rnd() + rnd()) * r * 0.8;
    dark.push(`M${Math.round(x + Math.cos(a) * d)} ${Math.round(y + Math.sin(a) * d)}h3`);
  }
  return { light: light.join(""), dark: dark.join("") };
})();

const SHELL = "M108 257L318 78 362 134 380 134 402 118 640 400 584 447V524H284V443H201V486L118 490Z";

const FloorPlan = () => (
  <svg width="197" height="178" viewBox="77 23 591 533" fill="none">
    <path d="M77 23h591v533H77z" fill="#fff" />
    <clipPath id="shell"><path d={SHELL + "M201 476H284V524H201Z"} /></clipPath>
    <g clipPath="url(#shell)">
      <path d="M77 23h591v533H77z" fill="#f1f1f3" />
      <path d={scan.light} stroke="#aeb0b6" strokeWidth="3" opacity=".28" />
      <path d={scan.dark} stroke="#85878e" strokeWidth="3" opacity=".3" />
      <path d="M265 125l45 55M280 230l40 40M200 300h80M393 330l55-45M430 385l60-45M440 280l50 60 60 60M350 370l80 15M205 445h380" stroke="#b9bbc2" strokeWidth="1.500" />
    </g>
    <path d="M327 255L393 330 350 370H280V293Z" fill="#fff" stroke="#9497b2" strokeWidth="2.500" />
    <path d="M218 445h66v31h-66z" fill="#fff" stroke="#80839c" strokeWidth="2.500" />
    <path d="M374 486h33v38h-33z" fill="#f8f8fa" stroke="#8d90a8" strokeWidth="2.500" />
    <path d="M118 524L108 257 318 78 345 52 392 104M402 118L640 400M584 447V524H201V462M284 443V524M118 524h83" stroke="#a5a7c0" strokeWidth="3" />
    <path d="M640 400L584 447" stroke="#b3b8de" strokeWidth="5" />
    <path d="M318 78l44 56" stroke="#8b91b5" strokeWidth="5" />
    <path d="M352 105l16-14 25 27-14 14" stroke="#c4c6d0" strokeWidth="1.500" />
    <circle cx="369" cy="132" r="7" fill="#fff" stroke="#a0a3b8" strokeWidth="2" />
    <path d="M380 134L402 118M345 84l10 12" stroke="#9a9cb8" strokeWidth="2" />
    <path d="M306 183l18-15M263 217l18-10M227 231l11 14M222 500h36" stroke="#9aa0c3" strokeWidth="4" />
    <path d="M196 366h9M196 423h10M196 445h9M442 284h6M488 340h6M430 385h6M380 210h6M398 478v8" stroke="#7d8090" strokeWidth="3" />
    <path d="M225 443h18M262 443h20" stroke="#7c7f98" strokeWidth="4" />
    <path d="M618 526l18-17" stroke="#ddd" strokeWidth="2" strokeDasharray="4 6" />
  </svg>
);

const ViewCube = () => (
  <svg width="72" height="76" viewBox="948 115 72 76" fontFamily="Liberation Sans, sans-serif" fontWeight="700" textAnchor="middle">
    <circle cx="984" cy="152" r="30" fill="none" stroke="#4b505c" strokeWidth="6" />
    <path d="M970 138h29v28h-29z" fill="#b4b5b8" />
    <path d="M976 143h17v17h-17z" fill="#a6a8b0" />
    <text x="984" y="155" fontSize="7" fill="#666b77">TOP</text>
    <g fontSize="11" fill="#b9bcc2">
      <text x="984" y="126">N</text>
      <text x="984" y="187">S</text>
      <text x="954" y="156">W</text>
      <text x="1015" y="156">E</text>
    </g>
  </svg>
);

const NavTools = () => (
  <svg width="13" height="111" viewBox="0 0 13 111" fill="none" stroke="#50555e" strokeWidth="1">
    <circle cx="8" cy="14" r="5.500" /><circle cx="8" cy="14" r="2.500" />
    <path d="M7 25h2M7 63h2M7 83h2" />
    <path d="M4 40l-2-3 2-1 1 1v-5h1.500v-1.500H8v1h1.500v1H11v6q0 4-3 4H6z" />
    <path d="M3 47l8 8M11 47l-8 8M2 46h3M2 46v3M12 46H9M2 56h3M2 56v-3" /><circle cx="10" cy="54" r="2" />
    <path d="M8 67v12M2 73h11M6 69l2-2 2 2M6 77l2 2 2-2M4 71l-2 2 2 2" />
    <path d="M2 90h10v4H2zM2 94h8v7H2z" /><path d="M5 95l4 2.500-4 2.500z" fill="#50555e" />
    <path d="M11 108h2" />
  </svg>
);

const Drawing = () => (
  <Canvas>
    <CanvasBar>
      <span>[−][Top][2D Wireframe]</span>
      <CanvasButtons>
        <IconButton $w={11} aria-label="Minimize drawing"><Pic w={6} h={6}><path d="M.5 4.500h5" strokeWidth="1.500" /></Pic></IconButton>
        <IconButton $w={11} aria-label="Restore drawing"><Pic w={6} h={6}><path d="M.5 2h3.500v3.500H.5zM2 2V.5h3.500V4H4" /></Pic></IconButton>
        <IconButton $w={9} aria-label="Close drawing"><Pic w={6} h={6}><path d="M1 1l4 4M5 1L1 5" strokeWidth="1.300" /></Pic></IconButton>
      </CanvasButtons>
    </CanvasBar>
    <At $left={358} $top={147}><FloorPlan /></At>
    <At $right={4} $top={19}><ViewCube /></At>
    <At $right={27} $top={103}><Wcs>WCS</Wcs></At>
    <At $right={0} $top={123}><NavBar><NavTools /></NavBar></At>
    <At $left={336} $top={324}>
      <svg width="54" height="24" viewBox="524 420 54 24" fill="none">
        <path d="M550.500 420v24M524 435.500h52" stroke="#6b717c" />
        <path d="M548 434h3v3h-3z" fill="#8f959f" />
        <path d="M553.500 425.500h6v6h-6z" stroke="#9aa0aa" />
        <path d="M556.500 427v3M555 428.500h3" stroke="#78b4ea" />
      </svg>
    </At>
    <At $left={372} $bottom={0}>
      <svg width="162" height="1" viewBox="0 0 162 1">
        <path d="M0 0h96v1H0z" fill="#8b9099" />
        <path d="M98 0h29v1H98z" fill="#a9c4e0" />
        <path d="M129 0h32v1h-32z" fill="#8b9099" />
      </svg>
    </At>
  </Canvas>
);

export default function App() {
  return (
    <Page>
      <Global />
      <Title />
      <TabRow>
        {TABS.map((t, i) => <Tab key={t} $on={i === 0}>{t}</Tab>)}
        <IconButton $w={28} aria-label="Ribbon display">
          <Pic w={14} h={6}>
            <path d="M0 .5h8v5H0z" {...F} />
            <path d="M3 4l1-1.500L5 4z" fill="#555" stroke="none" />
            <path d="M10.500 2.500h3L12 4z" {...F} />
          </Pic>
        </IconButton>
      </TabRow>
      <Ribbon />
      <DocTabs>
        <IconButton $w={11} aria-label="Menu"><Pic w={9} h={8}><path d="M0 1h9M0 4h9M0 7h9" strokeWidth="1.200" /></Pic></IconButton>
        <Slash>/</Slash>
        <DocTab>Start</DocTab>
        <Slash>/</Slash>
        <DocTab>Drawing1*</DocTab>
        <DocTab $on>A103.dxf*<Pic w={5} h={5}><path d="M.5.500l4 4M4.500.500l-4 4" /></Pic></DocTab>
        <IconButton $w={17} aria-label="New drawing"><Pic w={8} h={8}><path d="M4 0v8M0 4h8" strokeWidth="1.200" /></Pic></IconButton>
        <Slash>/</Slash>
      </DocTabs>
      <Strip />
      <Work>
        <LayerManager />
        <Drawing />
      </Work>
    </Page>
  );
}
